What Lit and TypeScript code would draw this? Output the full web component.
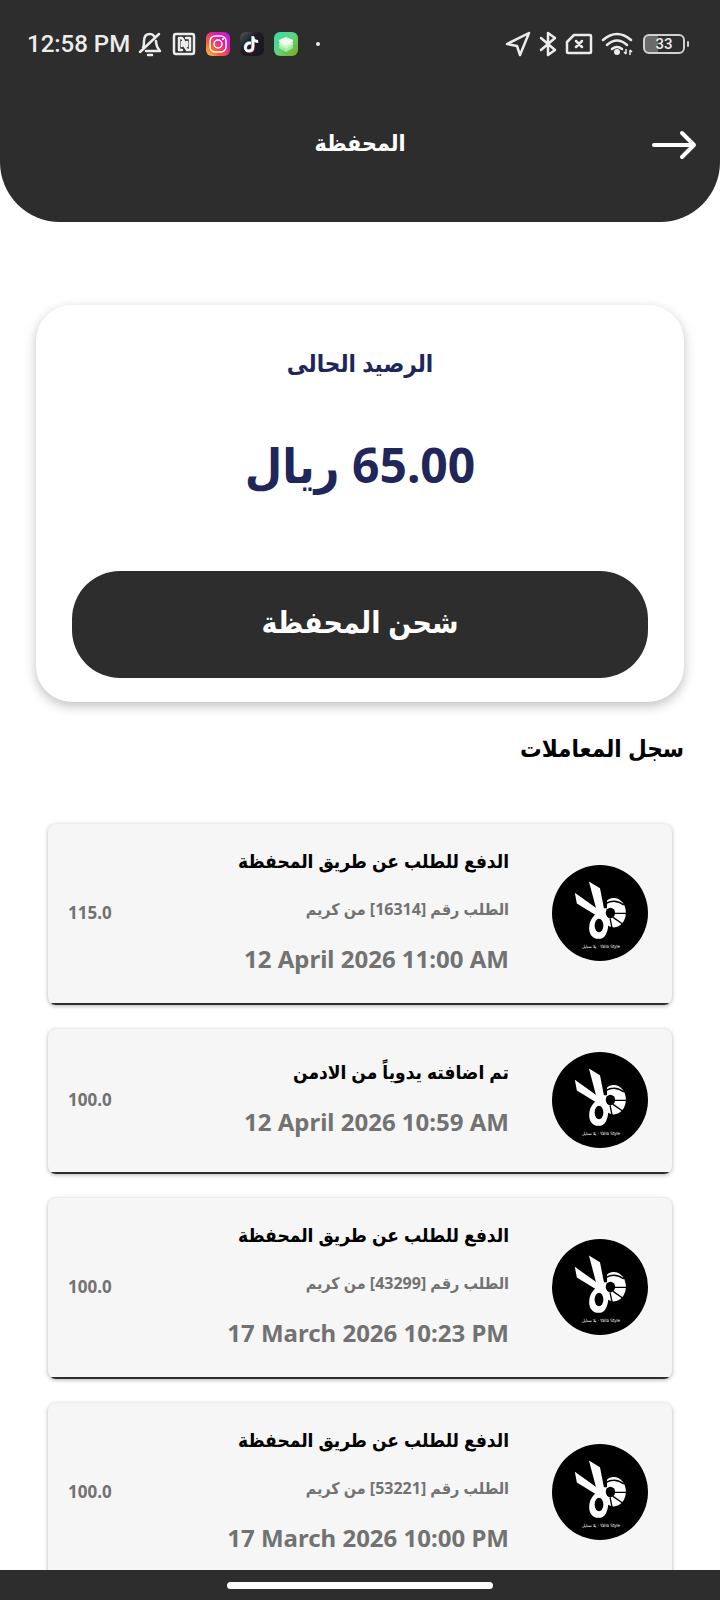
import { LitElement, css, html } from "lit";

interface Transaction {
    title: string;
    note?: string;
    date: string;
    amount: string;
}

const transactions: Transaction[] = [
    {
        title: "الدفع للطلب عن طريق المحفظة",
        note: "الطلب رقم [16314] من كريم",
        date: "12 April 2026 11:00 AM",
        amount: "115.0",
    },
    {
        title: "تم اضافته يدوياً من الادمن",
        date: "12 April 2026 10:59 AM",
        amount: "100.0",
    },
    {
        title: "الدفع للطلب عن طريق المحفظة",
        note: "الطلب رقم [43299] من كريم",
        date: "17 March 2026 10:23 PM",
        amount: "100.0",
    },
    {
        title: "الدفع للطلب عن طريق المحفظة",
        note: "الطلب رقم [53221] من كريم",
        date: "17 March 2026 10:00 PM",
        amount: "100.0",
    },
];

export class StatusBar extends LitElement {
    static styles = css`
        :host {
            display: flex;
            flex-direction: row;
            justify-content: space-between;
            align-items: center;
            height: 48px;
            padding: 20px 31px 0 27px;
            direction: ltr;
            color: #ececec;
            font-family: Roboto, sans-serif;
        }
        .group {
            display: flex;
            flex-direction: row;
            align-items: center;
        }
        .time {
            font-size: 24px;
            line-height: 32px;
            font-weight: 500;
            margin-right: 8px;
        }
        .apps {
            gap: 10px;
        }
        .system {
            gap: 8px;
        }
        .line {
            fill: none;
            stroke: currentColor;
            stroke-width: 2.5;
            stroke-linecap: round;
            stroke-linejoin: round;
        }
        .dot {
            width: 4px;
            height: 4px;
            margin-left: 8px;
            border-radius: 50%;
            background-color: currentColor;
        }
        .battery {
            display: flex;
            align-items: center;
            gap: 2px;
            margin-left: 2px;
        }
        .cell {
            box-sizing: border-box;
            width: 42px;
            height: 20px;
            border: 2px solid #d0d0d0;
            border-radius: 6px;
            background: linear-gradient(to right, #6b6b6b 33%, transparent 33%);
            font-size: 15px;
            line-height: 17px;
            font-weight: 500;
            text-align: center;
        }
        .tip {
            width: 2px;
            height: 6px;
            border-radius: 1px;
            background-color: #d0d0d0;
        }
    `
    render() {
        return html`
            <div class="group">
                <span class="time">12:58 PM</span>
                <div class="group apps">
                    <svg width="24" height="26" viewBox="0 0 24 26" class="line">
                        <path d="M5 17c1-2 1-4 1-7 0-4 2-7 6-7 2 0 3 .5 4 2M18 10c0 4 .5 6 4 10H8M2 21L21 3"/>
                        <path d="M10 24h4"/>
                    </svg>
                    <svg width="24" height="24" viewBox="0 0 24 24" class="line">
                        <rect x="2" y="2" width="20" height="20" rx="2"/>
                        <path d="M10 18H7V6h3l5 8V10M14 6h4v12h-3l-5-8v4"/>
                    </svg>
                    <svg width="24" height="24" viewBox="0 0 24 24">
                        <defs>
                            <linearGradient id="ig" x1="0" y1="1" x2="1" y2="0">
                                <stop offset="0" stop-color="#ffc83a"/>
                                <stop offset=".35" stop-color="#f7563a"/>
                                <stop offset=".65" stop-color="#e01cac"/>
                                <stop offset="1" stop-color="#b81ee8"/>
                            </linearGradient>
                        </defs>
                        <rect width="24" height="24" rx="6" fill="url(#ig)"/>
                        <g fill="none" stroke="#fff" stroke-width="1.5">
                            <rect x="4" y="4" width="16" height="16" rx="5"/>
                            <circle cx="12" cy="12" r="4"/>
                        </g>
                        <circle cx="17" cy="7" r="1" fill="#fff"/>
                    </svg>
                    <svg width="24" height="24" viewBox="0 0 24 24">
                        <defs>
                            <linearGradient id="tt" x1="0" y1="0" x2="1" y2="1">
                                <stop offset="0" stop-color="#55595e"/>
                                <stop offset=".4" stop-color="#1c1d26"/>
                                <stop offset="1" stop-color="#17171e"/>
                            </linearGradient>
                        </defs>
                        <rect width="24" height="24" rx="6" fill="url(#tt)"/>
                        <g fill="none" stroke-width="2.5">
                            <path d="M10.500 10.500c-7-1-7 9-2 8 3 0 4-2 4-4V4c0 3 2 5 5 5" stroke="#3ce0dc"/>
                            <path d="M11.500 11.500c-7-1-7 9-2 8 3 0 4-2 4-4V5c0 3 2 5 5 5" stroke="#f23c66"/>
                            <path d="M11 11c-7-1-7 9-2 8 3 0 4-2 4-4V4.500c0 3 2 5 5 5" stroke="#fff"/>
                        </g>
                    </svg>
                    <svg width="24" height="24" viewBox="0 0 24 24">
                        <defs>
                            <linearGradient id="st" x1="0" y1="0" x2="1" y2="1">
                                <stop offset="0" stop-color="#36dcb4"/>
                                <stop offset=".5" stop-color="#5ed47a"/>
                                <stop offset="1" stop-color="#7fa81c"/>
                            </linearGradient>
                        </defs>
                        <rect width="24" height="24" rx="6" fill="url(#st)"/>
                        <path d="M12 12l7 2v2l-7 4-7-4v-2z" fill="#a5e8a0"/>
                        <path d="M12 9l7 2v2l-7 4-7-4v-2z" fill="#c8f3c2"/>
                        <path d="M12 5l7 3v2l-7 4-7-4V8z" fill="#eefcec"/>
                    </svg>
                    <span class="dot"></span>
                </div>
            </div>
            <div class="group system">
                <svg width="26" height="26" viewBox="0 0 26 26" class="line">
                    <path d="M24 2L2 13l10 2 3 9z"/>
                </svg>
                <svg width="18" height="26" viewBox="0 0 18 26" class="line">
                    <path d="M2 7l14 12-7 5V2l7 5L2 19"/>
                </svg>
                <svg width="28" height="24" viewBox="0 0 28 24" class="line">
                    <path d="M9 3h16q1 0 1 1v16q0 1-1 1H3q-1 0-1-1V10z"/>
                    <path d="M11 9l6 6M17 9l-6 6"/>
                </svg>
                <svg width="32" height="26" viewBox="0 0 32 26">
                    <g class="line" stroke-width="3">
                        <path d="M2 9q14-12 28 0M6 14q10-9 20 0M11 18q5-4 10 0"/>
                    </g>
                    <path d="M25 18v5M29 19v5M25 23l-2-2M29 19l2 2" fill="none" stroke="currentColor" stroke-width="1.5"/>
                    <circle cx="16" cy="21" r="3" fill="currentColor"/>
                </svg>
                <div class="battery">
                    <div class="cell">33</div>
                    <div class="tip"></div>
                </div>
            </div>
        `
    }
}
customElements.define('status-bar', StatusBar);

export class StoreLogo extends LitElement {
    static styles = css`
        :host {
            display: block;
            width: 96px;
            height: 96px;
            border-radius: 50%;
            background-color: black;
            direction: ltr;
        }
        .caption {
            font-family: "DejaVu Sans Condensed", "DejaVu Sans", sans-serif;
            font-size: 13px;
            font-weight: normal;
            fill: white;
        }
    `
    render() {
        return html`
            <svg width="96" height="96" viewBox="38 47 286 286">
                <ellipse cx="222" cy="189" rx="36" ry="44" fill="#fff"/>
                <ellipse cx="212" cy="190" rx="14" ry="16" fill="#000"/>
                <g fill="none" stroke="#000" stroke-width="4">
                    <path d="M198 162q28-16 54 4M224 191h36M220 203l28 20M211 206l6 30"/>
                </g>
                <path d="M176 140h26v36h-26z" fill="#000"/>
                <g fill="#fff">
                    <path d="M148 96L181 116 195 188 174 194z"/>
                    <path d="M106 130L182 184 174 200 112 162z"/>
                    <path d="M186 180C206 196 209 222 203 242 198 260 190 267 177 267 157 267 147 250 149 230 151 210 162 198 172 190z"/>
                </g>
                <ellipse cx="178" cy="227" rx="13" ry="20" fill="#000"/>
                <text class="caption" x="184" y="294" text-anchor="middle">يلا ستايل · Yalla Style</text>
            </svg>
        `
    }
}
customElements.define('store-logo', StoreLogo);

export class TransactionCard extends LitElement {
    static properties = {
        item: { attribute: false },
    }
    declare item: Transaction;

    static styles = css`
        :host {
            display: block;
            flex-shrink: 0;
            overflow: hidden;
            border-radius: 8px;
            background-color: #f6f6f6;
            box-shadow: 0 1px 4px rgba(0, 0, 0, 0.3);
            color: #727272;
            font-weight: 700;
        }
        .card {
            display: flex;
            flex-direction: row;
            align-items: center;
            padding: 19px 24px 20px 20px;
            border-bottom: 2px solid #2d2d2d;
        }
        store-logo {
            flex-shrink: 0;
            margin: 4px 0;
        }
        .details {
            display: flex;
            flex-direction: column;
            flex: 1;
            gap: 12px;
            margin-right: 43px;
            padding-bottom: 4px;
        }
        .title {
            margin: 0;
            font-size: 19px;
            line-height: 36px;
            font-weight: 700;
            color: black;
        }
        .note {
            margin: 0;
            font-size: 16px;
            line-height: 36px;
        }
        .date {
            font-size: 24px;
            line-height: 40px;
        }
        .amount {
            font-size: 17px;
            line-height: 24px;
        }
    `
    render() {
        return html`
            <div class="card">
                <store-logo></store-logo>
                <div class="details">
                    <h3 class="title">${this.item.title}</h3>
                    ${this.item.note ? html`<p class="note">${this.item.note}</p>` : ""}
                    <time class="date"><bdi>${this.item.date}</bdi></time>
                </div>
                <span class="amount">${this.item.amount}</span>
            </div>
        `
    }
}
customElements.define('transaction-card', TransactionCard);

export class AppRoot extends LitElement {
    static styles = css`
        :host {
            display: flex;
            flex-direction: column;
            height: 100vh;
            overflow: hidden;
            direction: rtl;
            background-color: white;
            color: black;
            font-family: "Noto Sans", "DejaVu Sans Condensed", "DejaVu Sans", sans-serif;
        }
        header {
            flex-shrink: 0;
            border-radius: 0 0 60px 60px;
            background-color: #2d2d2d;
            color: white;
        }
        .toolbar {
            display: grid;
            grid-template-columns: 48px 1fr 48px;
            align-items: center;
            padding: 45px 22px 45px;
        }
        .toolbar h1 {
            margin: 0;
            padding-bottom: 6px;
            font-size: 23px;
            line-height: 58px;
            font-weight: 700;
            text-align: center;
        }
        button {
            border: none;
            font-family: inherit;
            color: white;
            cursor: pointer;
        }
        .back {
            display: flex;
            padding: 0;
            background-color: transparent;
        }
        main {
            display: flex;
            flex-direction: column;
            flex: 1;
            min-height: 0;
            padding: 83px 36px 0;
        }
        .balance {
            display: flex;
            flex-direction: column;
            flex-shrink: 0;
            padding: 34px 36px 24px;
            border-radius: 36px;
            box-shadow: 0 4px 12px rgba(0, 0, 0, 0.25);
            color: #20265a;
            text-align: center;
        }
        .balance h2 {
            margin: 0;
            font-size: 24px;
            line-height: 48px;
            font-weight: 700;
        }
        .total {
            margin: 36px 0 64px;
            font-size: 48px;
            line-height: 84px;
            font-weight: 700;
        }
        .charge {
            padding: 0 0 6px;
            border-radius: 48px;
            background-color: #2d2d2d;
            font-size: 30px;
            line-height: 101px;
            font-weight: 700;
        }
        .heading {
            margin: 20px 0 0;
            font-size: 24px;
            line-height: 52px;
            font-weight: 700;
        }
        .list {
            display: flex;
            flex-direction: column;
            flex: 1;
            gap: 24px;
            min-height: 0;
            margin-top: 38px;
            padding: 12px 12px 0;
            overflow: hidden;
        }
        footer {
            display: flex;
            justify-content: center;
            align-items: center;
            flex-shrink: 0;
            height: 30px;
            background-color: #2d2d2d;
        }
        .handle {
            width: 37%;
            height: 7px;
            border-radius: 4px;
            background-color: white;
        }
    `
    render() {
        return html`
            <header>
                <status-bar></status-bar>
                <div class="toolbar">
                    <button class="back" aria-label="رجوع">
                        <svg width="48" height="36" viewBox="0 0 48 36" fill="none" stroke="currentColor"
                            stroke-width="4" stroke-linecap="round" stroke-linejoin="round">
                            <path d="M4 18h40M32 6l12 12-12 12"/>
                        </svg>
                    </button>
                    <h1>المحفظة</h1>
                </div>
            </header>
            <main>
                <section class="balance">
                    <h2>الرصيد الحالى</h2>
                    <div class="total">65.00 ريال</div>
                    <button class="charge">شحن المحفظة</button>
                </section>
                <h2 class="heading">سجل المعاملات</h2>
                <div class="list">
                    ${transactions.map(item => html`
                        <transaction-card .item=${item}></transaction-card>
                    `)}
                </div>
            </main>
            <footer>
                <div class="handle"></div>
            </footer>
        `
    }
}
customElements.define('app-root', AppRoot);
